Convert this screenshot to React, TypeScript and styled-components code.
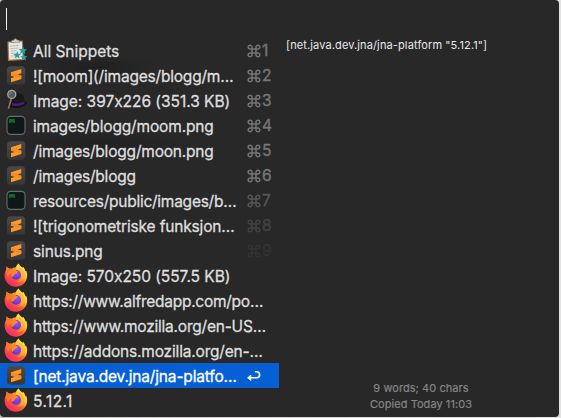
import React from 'react';
import styled, { createGlobalStyle } from 'styled-components';

const GlobalStyle = createGlobalStyle`
  * { box-sizing: border-box; }
  body { margin: 0; background: #cfcfcf; overflow: hidden; }
`;

const Desktop = styled.div`
  width: 561px;
  height: 418px;
  padding: 0 2px 1px 0;
  background: linear-gradient(90deg, #c4c0c0, #e2e2e2);
`;

const Panel = styled.main`
  width: 559px;
  height: 417px;
  display: flex;
  flex-direction: column;
  border-radius: 4px;
  overflow: hidden;
  color: #dfdfdf;
  font-family: Inter, 'Liberation Sans', sans-serif;
  font-feature-settings: 'calt' 0;
  background:
    radial-gradient(ellipse 65px 14px at 95px 68px, #202020, transparent),
    radial-gradient(ellipse 95px 15px at 100px 144px, #212121, transparent),
    #282828;
`;

const SearchBar = styled.header`
  height: 38px;
  padding: 8px 0 0 6px;
`;

const Caret = styled.div`
  width: 1px;
  height: 22px;
  background: #f4f4f4;
`;

const Body = styled.div`
  flex: 1;
  display: flex;
`;

const List = styled.ul`
  width: 279px;
  margin: 0;
  padding: 0;
  list-style: none;
`;

const Row = styled.li<{ $selected: boolean }>`
  height: 25px;
  display: flex;
  align-items: center;
  padding: 0 7px 0 4px;
  background: ${(p) => (p.$selected ? '#0760d3' : 'transparent')};
  color: ${(p) => (p.$selected ? '#fff' : '#dfdfdf')};
`;

const IconSlot = styled.span`
  width: 24px;
  height: 24px;
  margin: 0 5px 1px 0;
  flex: none;
  svg { display: block; }
`;

const Label = styled.span<{ $spacing: number }>`
  flex: 1;
  padding-top: 2px;
  font-size: 15.5px;
  line-height: 23px;
  white-space: nowrap;
  letter-spacing: ${(p) => p.$spacing}px;
  -webkit-text-stroke: 0.3px currentColor;
`;

const Shortcut = styled.span<{ $color: string }>`
  width: 25px;
  flex: none;
  display: flex;
  align-items: center;
  gap: 1px;
  padding-top: 1px;
  font-size: 15.5px;
  line-height: 24px;
  color: ${(p) => p.$color};
  -webkit-text-stroke: 0.4px currentColor;
`;

const Preview = styled.section`
  flex: 1;
  display: flex;
  flex-direction: column;
  justify-content: space-between;
  padding: 0 0 5px 7px;
`;

const PreviewText = styled.div`
  font-size: 11px;
  line-height: 14px;
  letter-spacing: 0.12px;
  white-space: nowrap;
  color: #e8e8e8;
`;

const Meta = styled.footer`
  margin-left: -3px;
  text-align: center;
  font-size: 11px;
  line-height: 16px;
  letter-spacing: 0.06px;
  color: #858585;
  -webkit-text-stroke: 0.2px currentColor;
`;

const Sublime = () => (
  <svg width="24" height="24" viewBox="0 0 24 24">
    <defs>
      <linearGradient id="sub" x1="0" y1="0" x2="0" y2="1">
        <stop offset="0" stopColor="#484848" />
        <stop offset="1" stopColor="#373737" />
      </linearGradient>
    </defs>
    <rect x="2.9" y="3.3" width="18.4" height="18.4" rx="3.8" fill="url(#sub)" />
    <path d="M7 9.3 17.3 6.1v4.2L13.4 11.5l3.9 1.2v3.4L7 19.3v-4.2l3.9-1.2L7 12.7z" fill="#ff9824" />
    <path d="M7 9.3 17.3 12.7v2.6L7 12.6z" fill="#f78b1f" />
  </svg>
);

const Terminal = () => (
  <svg width="24" height="24" viewBox="0 0 24 24">
    <rect x="3" y="3.4" width="18" height="18" rx="3.6" fill="#141a1c" stroke="#5f6d71" strokeWidth="1.1" />
    <rect x="4.5" y="4.9" width="15" height="15" rx="2.2" fill="#101719" />
    <path d="M6 6v4M8 6v3.6M10 6v3.8" stroke="#159a32" strokeWidth="1.2" />
    <path d="M6 7.2h2" stroke="#127327" strokeWidth="1" />
  </svg>
);

const Clipboard = () => (
  <svg width="24" height="24" viewBox="0 0 24 24">
    <path d="M3.4 3.5 18.8 2.4 20 22 4 23z" fill="#a97843" />
    <path d="M4.6 4.4 17.8 3.4 18.6 20.8 5.2 21.8z" fill="#e6e7e5" />
    <path d="M7 4.5 8 2.2h1.8C10 .3 12.8.3 13 2l2 .2.8 1.9z" fill="#d5d5d0" stroke="#6e6861" strokeWidth=".6" />
    <path d="M6.5 8.2 15 7.4M6.7 10.6l7.5-.5M7 13.1l6-.4M7.1 15.5l4-.3M7.2 18l4-.2" stroke="#a7abac" strokeWidth=".9" strokeDasharray="2.2 .6" />
    <g fill="#319c9f">
      <path d="m18.8 8.3 1.1 2.8 3 .1-2.2 2 .7 3-2.6-1.6-2.7 1.5.7-3-2.2-2 3-.1z" />
      <path d="m13.2 13.3 1.1 2.5 2.8.2-2.1 1.8.6 2.7-2.4-1.4-2.4 1.4.6-2.7-2.1-1.8 2.8-.2z" />
      <path d="m19.8 15.7 1 2.4 2.6.2-2 1.6.7 2.6-2.3-1.3-2.2 1.3.6-2.6-2-1.6 2.6-.2z" />
    </g>
  </svg>
);

const Hat = () => (
  <svg width="24" height="24" viewBox="0 0 24 24">
    <path d="M3 17.2C5 14.4 20 12.8 22.8 14c.8 2.8-4.8 6.4-11 6-4-.2-7-1.2-8.8-2.8z" fill="#171418" />
    <path d="M8 14c0-5 1.5-9 5-9 2.4.6 4.7.3 6 2.2.9 1.5 1.5 4 1.6 6.4C18 17 12 17.6 8 16z" fill="#19181b" />
    <path d="M8 15c4 1.2 9 .4 12.5-1.5l.2 1.8c-3 2.6-9 3.3-12.7 2z" fill="#4b1f80" />
    <path d="M7.1 11 4.6 20" stroke="#8f7160" strokeWidth="1.7" strokeLinecap="round" />
    <circle cx="7.8" cy="6.4" r="4" fill="#555a5c" stroke="#a6a6a6" strokeWidth="1.3" />
    <path d="M5.7 6.7c.2-1.5 1-2.2 2.2-2.3" stroke="#828889" fill="none" />
  </svg>
);

const Firefox = () => (
  <svg width="24" height="24" viewBox="0 0 24 24">
    <defs>
      <linearGradient id="ffBody" x1=".85" y1=".1" x2=".2" y2=".95">
        <stop offset="0" stopColor="#fff04a" />
        <stop offset=".35" stopColor="#ffb52c" />
        <stop offset=".6" stopColor="#ff5a38" />
        <stop offset="1" stopColor="#f52566" />
      </linearGradient>
      <linearGradient id="ffHead" x1="0" y1="0" x2="1" y2="1">
        <stop offset="0" stopColor="#ff6a26" />
        <stop offset="1" stopColor="#ff9a2e" />
      </linearGradient>
      <radialGradient id="ffCore" cx=".6" cy=".35" r=".7">
        <stop offset="0" stopColor="#a34dfa" />
        <stop offset="1" stopColor="#5532c7" />
      </radialGradient>
    </defs>
    <path d="M14.8.5c.6 1.6 2 2.8 3.8 4.3l.4-1c1.3 1.3 2.2 3.1 2.5 4.5l.8-.3c.8 2 1.1 4.2.7 6.4C22.1 19.8 17.6 23.7 12 23.7 5.7 23.7.6 18.9.6 12.4c0-2.6.8-4.6 1.9-6.2l.2-2.8 2.2 2.2c1-.2 2-.1 2.9.2C9.1 4.7 10.4 4.3 11.8 4.4c.4-1.7 1.5-3 3-3.9z" fill="url(#ffBody)" />
    <circle cx="12.1" cy="11.9" r="4.9" fill="url(#ffCore)" />
    <path d="M2.6 3.5 5 6c1.4-.4 2.6-.2 3.9.6.6-1.1 1.6-1.9 3-2.2-.8 1-.7 2-.2 3l2.2 1.1c-.3 1.3-1.6 1.7-2.9 2.4-.4 1.6-2 1.6-2.5 3-1.4-1-1.6-2.2-1-3.7-2.1.4-3.2 1.7-3.4 3.7C2 10.5 1.5 7 2.6 3.5z" fill="url(#ffHead)" />
    <path d="M16 8.4c1.3 1 2 2.4 2 4.1-.1 3.7-3 6-6.1 5.8 5.2 1.8 9-2 8.7-6.6-.2-3.4-2.5-6.1-5.8-7.7.4 1.6.2 3.2 1.2 4.4z" fill="#ffb136" opacity=".7" />
  </svg>
);

const Command = () => (
  <svg width="14" height="14" viewBox="0 0 14 14" fill="none" stroke="currentColor" strokeWidth="1.5">
    <path d="M5 5H3.2a1.9 1.9 0 1 1 1.8-1.9v7.8A1.9 1.9 0 1 1 3.2 9h7.6A1.9 1.9 0 1 1 9 10.9V3.1A1.9 1.9 0 1 1 10.8 5z" />
  </svg>
);

const Return = () => (
  <svg width="16" height="14" viewBox="0 0 16 14" fill="none" stroke="currentColor" strokeWidth="1.6" strokeLinecap="round" strokeLinejoin="round">
    <path d="M8.6 2.8h1a3 3 0 0 1 0 6H2" />
    <path d="M3.6 6.3.6 8.8l3 2.5z" fill="currentColor" strokeWidth="0.8" />
  </svg>
);

const icons = { clipboard: Clipboard, sublime: Sublime, hat: Hat, terminal: Terminal, firefox: Firefox };

type Item = { icon: keyof typeof icons; text: string; spacing?: number; key?: string; color?: string };

const items: Item[] = [
  { icon: 'clipboard', text: 'All Snippets', spacing: -0.03, key: '1', color: '#757575' },
  { icon: 'sublime', text: '![moom](/images/blogg/m…', spacing: -0.2, key: '2', color: '#757575' },
  { icon: 'hat', text: 'Image: 397x226 (351.3 KB)', spacing: -0.03, key: '3', color: '#757575' },
  { icon: 'terminal', text: 'images/blogg/moom.png', spacing: -0.15, key: '4', color: '#757575' },
  { icon: 'sublime', text: '/images/blogg/moon.png', spacing: -0.2, key: '5', color: '#757575' },
  { icon: 'sublime', text: '/images/blogg', spacing: -0.2, key: '6', color: '#757575' },
  { icon: 'terminal', text: 'resources/public/images/b…', spacing: -0.25, key: '7', color: '#555' },
  { icon: 'sublime', text: '![trigonometriske funksjon…', spacing: -0.16, key: '8', color: '#424242' },
  { icon: 'sublime', text: 'sinus.png', spacing: -0.15, key: '9', color: '#333' },
  { icon: 'firefox', text: 'Image: 570x250 (557.5 KB)', spacing: -0.05 },
  { icon: 'firefox', text: 'https://www.alfredapp.com/po…', spacing: -0.26 },
  { icon: 'firefox', text: 'https://www.mozilla.org/en-US…', spacing: -0.22 },
  { icon: 'firefox', text: 'https://addons.mozilla.org/en-…', spacing: -0.18 },
  { icon: 'sublime', text: '[net.java.dev.jna/jna-platfo…', spacing: -0.17 },
  { icon: 'firefox', text: '5.12.1', spacing: 0.4 },
];

const SELECTED = 13;

export default function App() {
  return (
    <Desktop>
      <GlobalStyle />
      <Panel>
        <SearchBar>
          <Caret />
        </SearchBar>
        <Body>
          <List>
            {items.map((item, i) => {
              const Icon = icons[item.icon];
              return (
                <Row key={i} $selected={i === SELECTED}>
                  <IconSlot>
                    <Icon />
                  </IconSlot>
                  <Label $spacing={item.spacing ?? 0}>{item.text}</Label>
                  {item.key && (
                    <Shortcut $color={item.color!}>
                      <Command />
                      {item.key}
                    </Shortcut>
                  )}
                  {i === SELECTED && (
                    <Shortcut $color="#fff">
                      <Return />
                    </Shortcut>
                  )}
                </Row>
              );
            })}
          </List>
          <Preview>
            <PreviewText>[net.java.dev.jna/jna-platform "5.12.1"]</PreviewText>
            <Meta>
              9 words; 40 chars
              <br />
              Copied Today 11:03
            </Meta>
          </Preview>
        </Body>
      </Panel>
    </Desktop>
  );
}
